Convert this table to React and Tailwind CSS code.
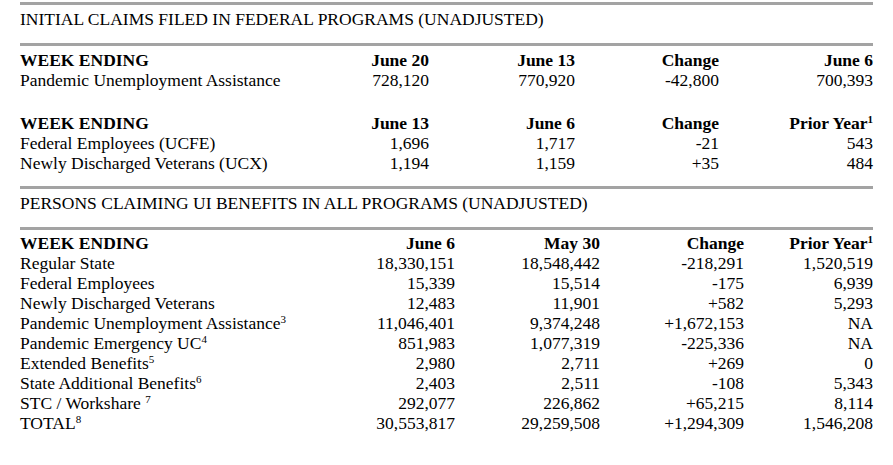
import React from "react";

const Line = ({ className = "" }) => (
  <div className={"h-[3px] w-[853px] bg-[#a3a3a3] " + className} />
);

const Sup = ({ children }) => (
  <sup className="text-[11px] top-[-6px]">{children}</sup>
);

const grid1 = "grid grid-cols-[269px_140px_146px_144px_154px] w-[853px]";
const grid3 = "grid grid-cols-[280px_155px_145px_144px_129px] w-[853px]";

function Row({ grid, cells, bold }) {
  return (
    <div className={grid + " h-[20px] " + (bold ? "font-bold" : "")}>
      {cells.map((c, i) => (
        <div key={i} className={(i === 0 ? "text-left" : "text-right") + " whitespace-nowrap"}>
          {c}
        </div>
      ))}
    </div>
  );
}

export default function App() {
  return (
    <div
      className="bg-white w-[893px] h-[465px] text-black text-[17.5px] leading-[20px] pl-[20px] pt-[2px]"
      style={{ fontFamily: '"Liberation Serif", "Times New Roman", serif' }}
    >
      <Line />
      <div className="mt-[4px] h-[20px] whitespace-nowrap">
        INITIAL CLAIMS FILED IN FEDERAL PROGRAMS (UNADJUSTED)
      </div>
      <Line className="mt-[14px]" />
      <div className="mt-[4px]">
        <Row grid={grid1} bold cells={["WEEK ENDING", "June 20", "June 13", "Change", "June 6"]} />
        <Row grid={grid1} cells={["Pandemic Unemployment Assistance", "728,120", "770,920", "-42,800", "700,393"]} />
      </div>
      <div className="mt-[23px]">
        <Row grid={grid1} bold cells={["WEEK ENDING", "June 13", "June 6", "Change", <>Prior Year<Sup>1</Sup></>]} />
        <Row grid={grid1} cells={["Federal Employees (UCFE)", "1,696", "1,717", "-21", "543"]} />
        <Row grid={grid1} cells={["Newly Discharged Veterans (UCX)", "1,194", "1,159", "+35", "484"]} />
      </div>
      <Line className="mt-[13px]" />
      <div className="mt-[4px] h-[20px] whitespace-nowrap">
        PERSONS CLAIMING UI BENEFITS IN ALL PROGRAMS (UNADJUSTED)
      </div>
      <Line className="mt-[14px]" />
      <div className="mt-[3px]">
        <Row grid={grid3} bold cells={["WEEK ENDING", "June 6", "May 30", "Change", <>Prior Year<Sup>1</Sup></>]} />
        <Row grid={grid3} cells={["Regular State", "18,330,151", "18,548,442", "-218,291", "1,520,519"]} />
        <Row grid={grid3} cells={["Federal Employees", "15,339", "15,514", "-175", "6,939"]} />
        <Row grid={grid3} cells={["Newly Discharged Veterans", "12,483", "11,901", "+582", "5,293"]} />
        <Row grid={grid3} cells={[<>Pandemic Unemployment Assistance<Sup>3</Sup></>, "11,046,401", "9,374,248", "+1,672,153", "NA"]} />
        <Row grid={grid3} cells={[<>Pandemic Emergency UC<Sup>4</Sup></>, "851,983", "1,077,319", "-225,336", "NA"]} />
        <Row grid={grid3} cells={[<>Extended Benefits<Sup>5</Sup></>, "2,980", "2,711", "+269", "0"]} />
        <Row grid={grid3} cells={[<>State Additional Benefits<Sup>6</Sup></>, "2,403", "2,511", "-108", "5,343"]} />
        <Row grid={grid3} cells={[<>STC / Workshare <Sup>7</Sup></>, "292,077", "226,862", "+65,215", "8,114"]} />
        <Row grid={grid3} cells={[<>TOTAL<Sup>8</Sup></>, "30,553,817", "29,259,508", "+1,294,309", "1,546,208"]} />
      </div>
    </div>
  );
}
